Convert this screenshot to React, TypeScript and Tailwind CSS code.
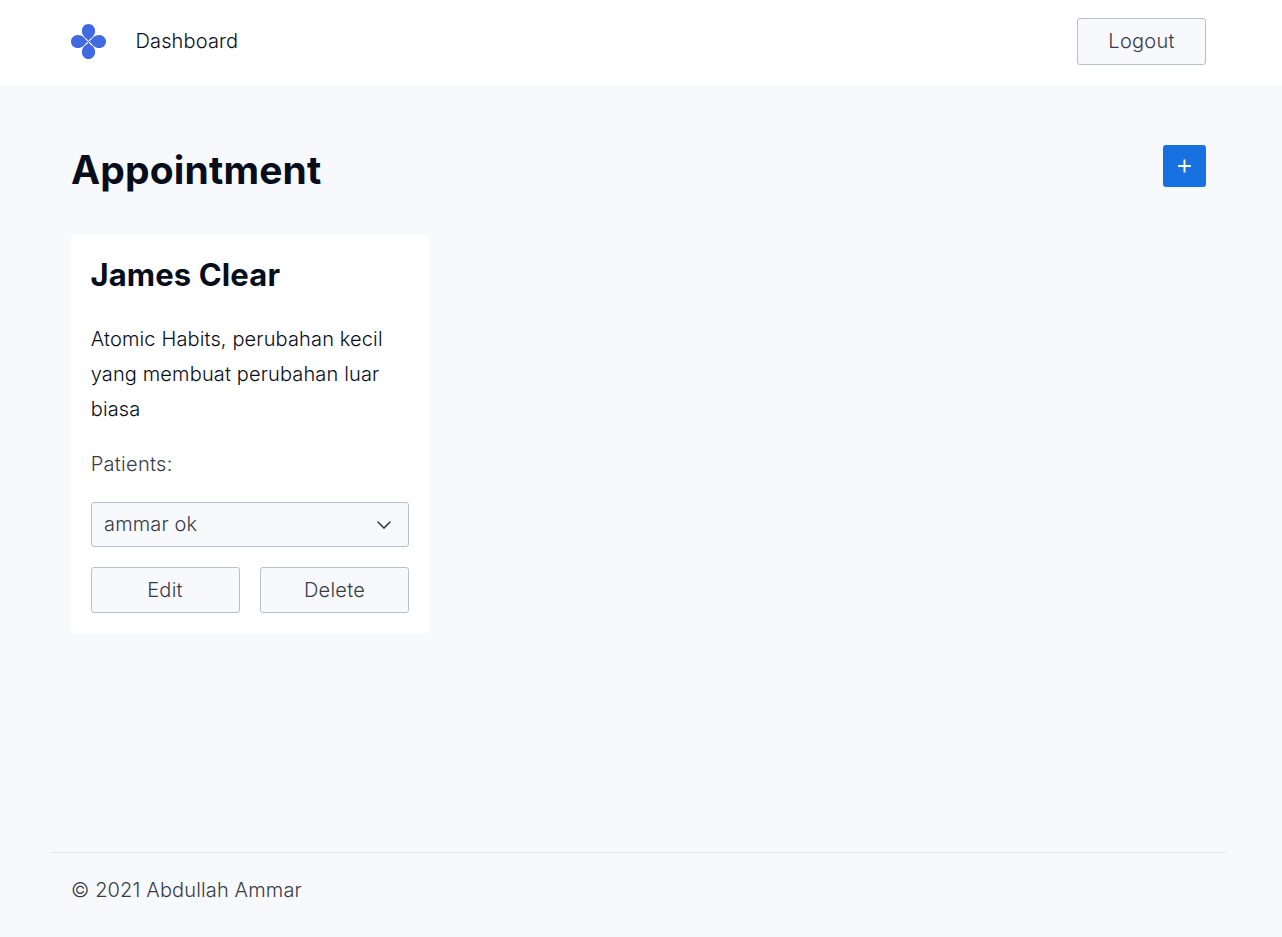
const button =
  "flex items-center justify-center rounded-[3px] border border-[#bbbfca] bg-[#f8f9fd] text-xl font-light tracking-[0.25px] text-[#393c46]";

function Logo() {
  return (
    <svg width="35" height="35" viewBox="0 0 35 35" fill="#4169e1">
      {[0, 90, 180, 270].map((a) => (
        <path
          key={a}
          transform={`rotate(${a} 17.5 17.5)`}
          d="M17.500 17.300C16.800 15.300 15 14.500 13.200 12.700C11.600 11 10.900 9 10.900 6.800C10.900 2.900 13.900 0 17.500 0S24.100 2.900 24.100 6.800C24.100 9 23.400 11 21.800 12.700C20 14.500 18.200 15.300 17.500 17.300Z"
        />
      ))}
    </svg>
  );
}

export default function App() {
  return (
    <div className="flex h-[937px] flex-col bg-[#f8f9fd] font-['Inter',sans-serif] text-xl font-light tracking-[0.14px] text-[#070e1b]">
      <header className="flex h-[85px] shrink-0 items-start bg-white pr-[76px] pl-[71px]">
        <div className="mt-6">
          <Logo />
        </div>
        <a className="mt-[27px] ml-[29.5px] leading-7">Dashboard</a>
        <button className={`${button} mt-[18px] ml-auto h-[47px] w-[129px] pb-px`}>Logout</button>
      </header>
      <main className="flex-1 pr-[76px] pl-[71px]">
        <div className="flex h-[150px] items-start justify-between pt-[60px]">
          <h1 className="text-[39px] leading-[50px] font-bold tracking-[0.15px]">Appointment</h1>
          <button className="flex h-[42px] w-[43px] items-center justify-center rounded-[3px] bg-[#1771e0] text-white">
            <svg width="13" height="14" viewBox="0 0 13 14" stroke="currentColor" strokeWidth="1.9">
              <path d="M6.500 .5v13M0 7h13" />
            </svg>
          </button>
        </div>
        <article className="h-[398px] w-[358px] rounded-[3px] bg-white p-5">
          <h2 className="-ml-[0.5px] text-[31px] leading-10 font-bold tracking-[0.12px]">James Clear</h2>
          <p className="mt-[27px] -ml-[0.3px] leading-[35px]">
            Atomic Habits, perubahan kecil yang membuat perubahan luar biasa
          </p>
          <p className="mt-5 -ml-[0.3px] leading-[35px] tracking-[0.3px] text-[#393c46]">Patients:</p>
          <div className="mt-5 flex h-[45px] items-center justify-between rounded-[3px] border border-[#bbbfca] bg-[#f8f9fd] pr-[17px] pl-3 text-[#393c46]">
            <span className="pb-0.5">ammar ok</span>
            <svg width="14" height="8" viewBox="0 0 14 8" fill="none" stroke="#343a40" strokeWidth="1.6">
              <path d="M.7.7 7 7 13.300.7" />
            </svg>
          </div>
          <div className="mt-5 grid grid-cols-2 gap-5">
            <button className={`${button} h-[46px] pr-px`}>Edit</button>
            <button className={`${button} h-[46px]`}>Delete</button>
          </div>
        </article>
      </main>
      <footer className="mr-14 ml-[51px] h-[85px] border-t border-[#e6e6ea] px-5 pt-5 leading-[35px] text-[#393c46]">
        © 2021 Abdullah Ammar
      </footer>
    </div>
  );
}
